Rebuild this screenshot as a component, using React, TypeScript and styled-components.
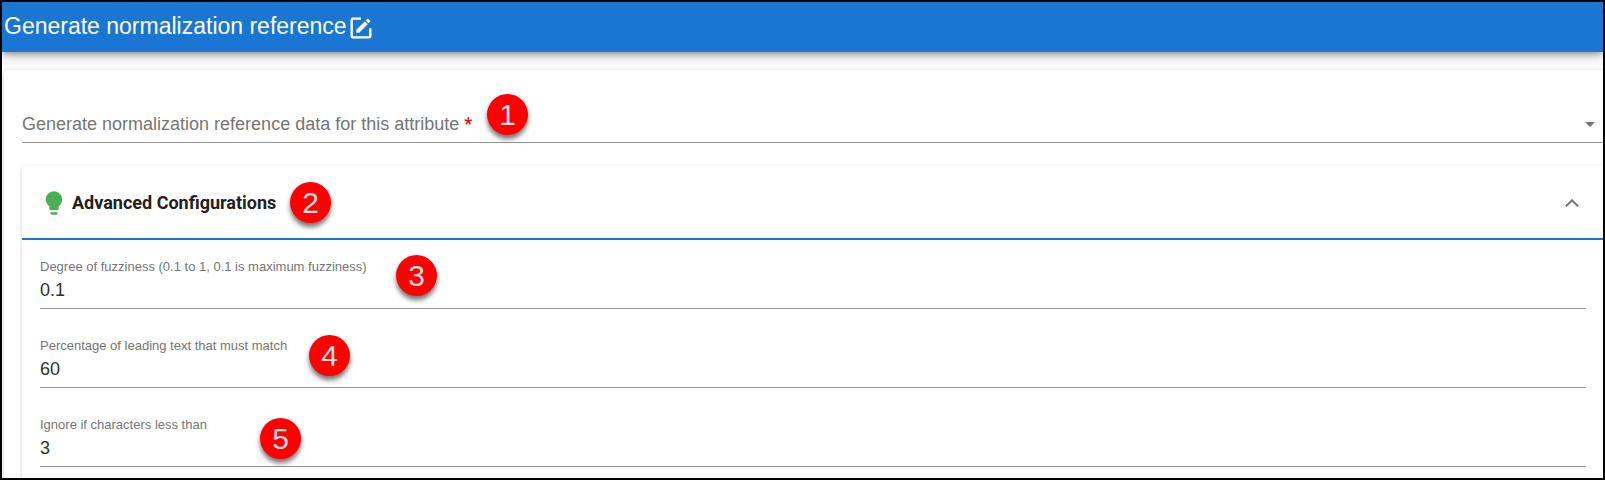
import React, { useState } from "react";
import styled, { createGlobalStyle } from "styled-components";

const GlobalStyle = createGlobalStyle`
  *, *::before, *::after { box-sizing: border-box; }
  html, body, #root { height: 100%; }
  body {
    margin: 0;
    background: #fff;
    color: rgba(0, 0, 0, 0.87);
    font-family: "Liberation Sans", Arial, sans-serif;
  }
`;

const Frame = styled.div`
  display: flex;
  flex-direction: column;
  height: 100vh;
  border: 2px solid #000;
  background: #fdfdfd;
  overflow: hidden;
`;

const Toolbar = styled.header`
  display: flex;
  flex: none;
  align-items: center;
  height: 50px;
  padding: 0 2px;
  background: #1976d2;
  color: #fff;
  box-shadow: 0 3px 5px -1px rgba(0, 0, 0, 0.3), 0 6px 10px rgba(0, 0, 0, 0.16);
`;

const Title = styled.h1`
  margin: 0;
  padding-bottom: 2px;
  font-size: 23px;
  font-weight: 400;
  line-height: 32px;
`;

const IconButton = styled.button`
  display: flex;
  padding: 2px 0 0;
  border: 0;
  background: none;
  color: inherit;
  cursor: pointer;
`;

const Card = styled.section`
  border-radius: 4px 0 0 0;
  background: #fff;
  box-shadow: 0 1px 4px rgba(0, 0, 0, 0.18);
`;

const PageCard = styled(Card)`
  flex: none;
  margin: 18px 0 0 2px;
  padding: 38px 0 24px 18px;
`;

const AttributeField = styled.div`
  position: relative;
  display: grid;
  align-items: center;
  height: 35px;
  margin-bottom: 23px;
  padding-bottom: 2px;
  border-bottom: 1px solid #949494;

  > * { grid-area: 1 / 1; }
`;

const AttributeLabel = styled.label`
  color: #757575;
  font-size: 18px;
  line-height: 32px;
  pointer-events: none;
`;

const Required = styled.span`
  color: #f00;
  font-family: Roboto, sans-serif;
  font-weight: 500;
`;

const Select = styled.select`
  width: 100%;
  height: 100%;
  border: 0;
  outline: 0;
  appearance: none;
  background: transparent;
  font: inherit;
`;

const Caret = styled.svg`
  justify-self: end;
  margin-right: 8px;
  fill: #757575;
  pointer-events: none;
`;

const PanelHeader = styled.div`
  position: relative;
  border-bottom: 2px solid #1976d2;
`;

const PanelToggle = styled.button`
  display: flex;
  align-items: center;
  gap: 4px;
  width: 100%;
  height: 72px;
  padding: 2px 24px 0 18px;
  border: 0;
  background: none;
  color: #212121;
  font: 700 18px/24px Roboto, sans-serif;
  cursor: pointer;
`;

const Chevron = styled.svg<{ $open: boolean }>`
  margin-left: auto;
  transform: ${({ $open }) => ($open ? "none" : "rotate(180deg)")};
`;

const Fields = styled.div`
  display: flex;
  flex-direction: column;
  gap: 28px;
  padding: 18px 17px 28px 18px;
`;

const FieldBox = styled.div`
  position: relative;
  display: flex;
  flex-direction: column;
  border-bottom: 1px solid #949494;
`;

const FieldLabel = styled.label`
  color: #757575;
  font-size: 13px;
  line-height: 18px;
`;

const FieldInput = styled.input`
  width: 100%;
  height: 32px;
  padding: 0 0 4px;
  border: 0;
  outline: 0;
  background: transparent;
  color: #303030;
  font-family: inherit;
  font-size: 18px;
`;

const Badge = styled.span<{ $left: number; $top: number }>`
  position: absolute;
  left: ${({ $left }) => $left}px;
  top: ${({ $top }) => $top}px;
  width: 41px;
  height: 41px;
  border-radius: 50%;
  background: #f00;
  box-shadow: 0 4px 5px rgba(0, 0, 0, 0.55);
  color: #ddd;
  font: 400 30px/41px "Liberation Sans", Arial, sans-serif;
  text-align: center;
  pointer-events: none;
`;

const FIELDS = [
  { id: "fuzziness", label: "Degree of fuzziness (0.1 to 1, 0.1 is maximum fuzziness)", value: "0.1", step: 3, left: 356, top: -3 },
  { id: "leading", label: "Percentage of leading text that must match", value: "60", step: 4, left: 269, top: -2 },
  { id: "minimum", label: "Ignore if characters less than", value: "3", step: 5, left: 220, top: 2 },
];

export default function App() {
  const [open, setOpen] = useState(true);

  return (
    <>
      <GlobalStyle />
      <Frame>
        <Toolbar>
          <Title>Generate normalization reference</Title>
          <IconButton type="button" aria-label="Edit name">
            <svg width="28" height="28" viewBox="0 0 24 24" fill="currentColor">
              <path d="M5 3C3.89 3 3 3.89 3 5V19A2 2 0 0 0 5 21H19A2 2 0 0 0 21 19V12H19V19H5V5H12V3H5M17.78 4C17.61 4 17.43 4.07 17.3 4.2L16.08 5.41L18.58 7.91L19.8 6.7C20.06 6.44 20.06 6 19.8 5.75L18.25 4.2C18.12 4.07 17.95 4 17.78 4M15.37 6.12L8 13.5V16H10.5L17.87 8.62L15.37 6.12Z" />
            </svg>
          </IconButton>
        </Toolbar>
        <PageCard as="main">
          <AttributeField>
            <Select id="attribute" required defaultValue="">
              <option value="" aria-label="None" />
            </Select>
            <AttributeLabel htmlFor="attribute">
              Generate normalization reference data for this attribute <Required>*</Required>
            </AttributeLabel>
            <Caret width="10" height="5" viewBox="0 0 10 5">
              <path d="M0 0h10L5 5z" />
            </Caret>
            <Badge $left={465} $top={-14}>1</Badge>
          </AttributeField>
          <Card>
            <PanelHeader>
              <PanelToggle type="button" aria-expanded={open} onClick={() => setOpen(!open)}>
                <svg width="28" height="28" viewBox="0 0 24 24" fill="#4caf50">
                  <path d="M9 21c0 .55.45 1 1 1h4c.55 0 1-.45 1-1v-1H9v1zm3-19C8.14 2 5 5.14 5 9c0 2.38 1.19 4.47 3 5.74V17c0 .55.45 1 1 1h6c.55 0 1-.45 1-1v-2.26c1.81-1.27 3-3.36 3-5.74 0-3.86-3.14-7-7-7z" />
                </svg>
                Advanced Configurations
                <Chevron $open={open} width="14" height="8" viewBox="0 0 14 8" fill="none" stroke="#757575" strokeWidth="2">
                  <path d="M1 7.3 7 1.3l6 6" />
                </Chevron>
              </PanelToggle>
              <Badge $left={268} $top={16}>2</Badge>
            </PanelHeader>
            {open && (
              <Fields>
                {FIELDS.map((field) => (
                  <FieldBox key={field.id}>
                    <FieldLabel htmlFor={field.id}>{field.label}</FieldLabel>
                    <FieldInput id={field.id} defaultValue={field.value} />
                    <Badge $left={field.left} $top={field.top}>{field.step}</Badge>
                  </FieldBox>
                ))}
              </Fields>
            )}
          </Card>
        </PageCard>
      </Frame>
    </>
  );
}
